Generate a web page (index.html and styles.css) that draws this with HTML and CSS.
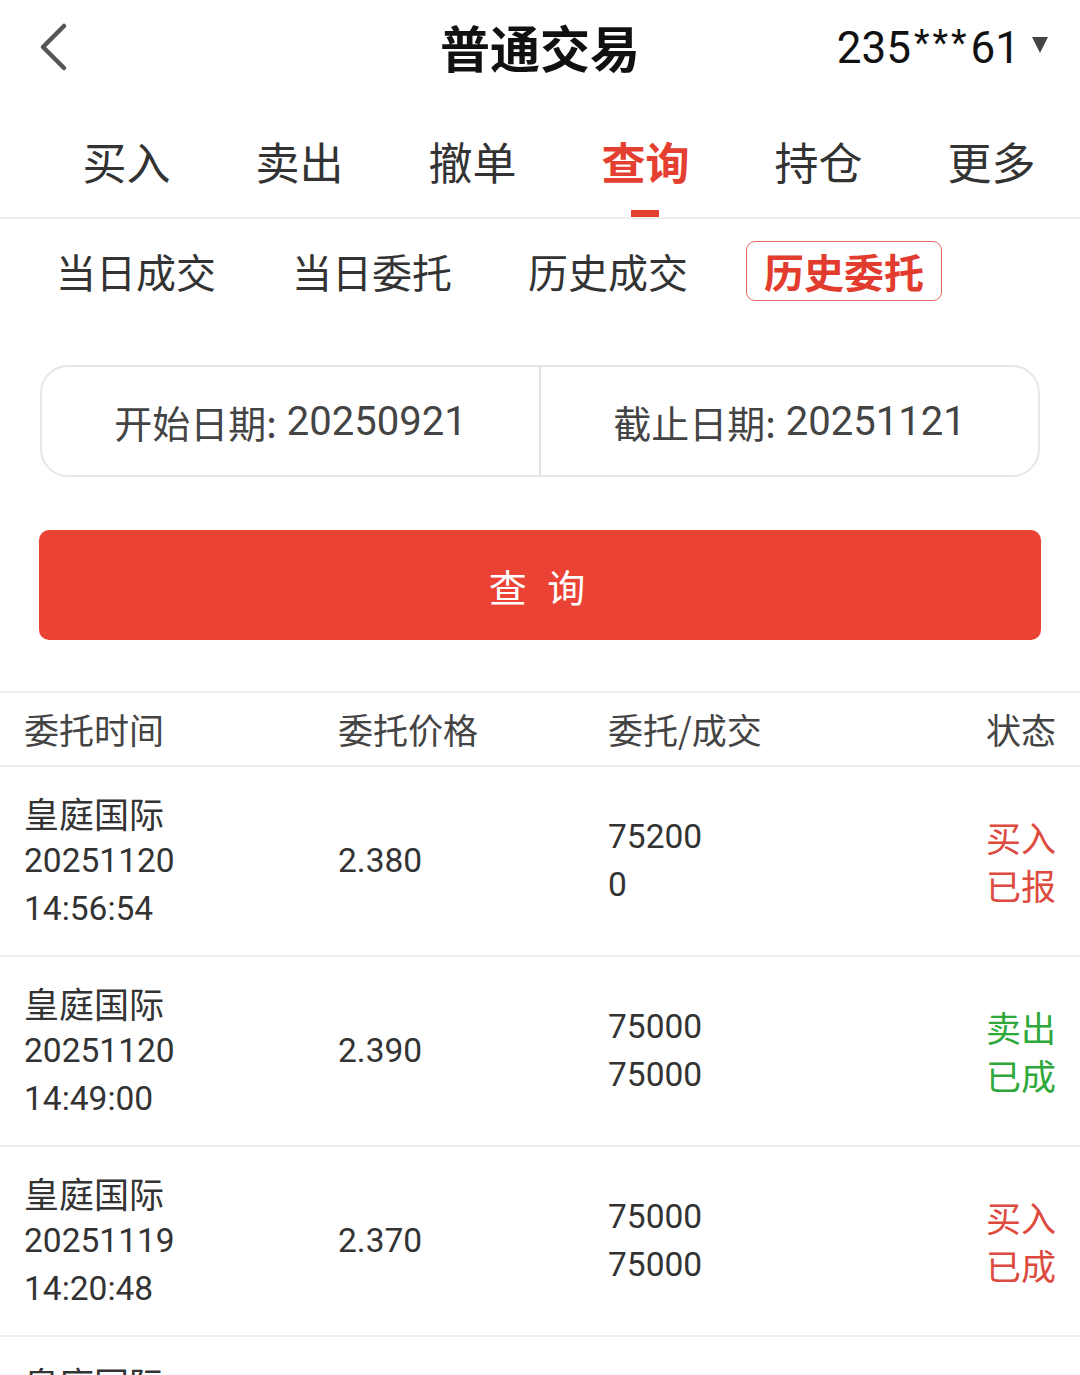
FILE: index.html
```html
<!DOCTYPE html>
<html lang="zh-CN">
<head>
    <meta charset="UTF-8">
    <meta name="viewport" content="width=device-width, initial-scale=1.0">
    <title>普通交易</title>
    <link rel="stylesheet" href="styles.css">
</head>
<body>
    <!-- Top bar -->
    <div class="topbar">
        <div class="back">
            <svg width="34" height="50" viewBox="0 0 34 50"><path d="M28 4 L7 25 L28 46" fill="none" stroke="#555" stroke-width="4.5" stroke-linecap="round" stroke-linejoin="round"/></svg>
        </div>
        <div class="title">普通交易</div>
        <div class="account">235<span class="stars">***</span>61<span class="caret"></span></div>
    </div>

    <!-- Main tabs -->
    <div class="tabs">
        <div class="tab">买入</div>
        <div class="tab">卖出</div>
        <div class="tab">撤单</div>
        <div class="tab active">查询</div>
        <div class="tab">持仓</div>
        <div class="tab">更多</div>
    </div>

    <!-- Sub tabs -->
    <div class="subtabs">
        <div class="subtab">当日成交</div>
        <div class="subtab">当日委托</div>
        <div class="subtab">历史成交</div>
        <div class="subtab active">历史委托</div>
    </div>

    <!-- Date range -->
    <div class="dates">
        <div class="date">开始日期: <span class="num">20250921</span></div>
        <div class="date">截止日期: <span class="num">20251121</span></div>
    </div>

    <div class="btn-wrap">
        <button class="btn">查 询</button>
    </div>

    <!-- Result table -->
    <div class="table">
        <div class="row head">
            <div>委托时间</div>
            <div>委托价格</div>
            <div>委托/成交</div>
            <div class="right">状态</div>
        </div>
        <div class="row">
            <div><div>皇庭国际</div><div class="num">20251120</div><div class="num">14:56:54</div></div>
            <div class="num">2.380</div>
            <div><div class="num">75200</div><div class="num">0</div></div>
            <div class="status red"><div>买入</div><div>已报</div></div>
        </div>
        <div class="row">
            <div><div>皇庭国际</div><div class="num">20251120</div><div class="num">14:49:00</div></div>
            <div class="num">2.390</div>
            <div><div class="num">75000</div><div class="num">75000</div></div>
            <div class="status green"><div>卖出</div><div>已成</div></div>
        </div>
        <div class="row">
            <div><div>皇庭国际</div><div class="num">20251119</div><div class="num">14:20:48</div></div>
            <div class="num">2.370</div>
            <div><div class="num">75000</div><div class="num">75000</div></div>
            <div class="status red"><div>买入</div><div>已成</div></div>
        </div>
        <div class="row">
            <div><div>皇庭国际</div><div class="num">20251119</div><div class="num">10:12:31</div></div>
            <div class="num">2.360</div>
            <div><div class="num">75000</div><div class="num">75000</div></div>
            <div class="status red"><div>买入</div><div>已成</div></div>
        </div>
    </div>
</body>
</html>
```

FILE: styles.css
```css
body {
    margin: 0;
    padding: 0;
    background: #fff;
    color: #333;
    font-family: "Noto Sans CJK SC", "Noto Sans", sans-serif;
    overflow: hidden;
}

.num {
    font-family: Roboto, "Noto Sans CJK SC", sans-serif;
}

/* Top bar */
.topbar {
    height: 96px;
    display: flex;
    align-items: center;
    justify-content: center;
    position: relative;
}
.back {
    position: absolute;
    left: 36px;
    top: 22px;
}
.title {
    font-size: 50px;
    font-weight: bold;
    color: #111;
    margin-top: -4px;
}
.account {
    position: absolute;
    right: 32px;
    top: 22px;
    font-family: Roboto, sans-serif;
    font-size: 44px;
    color: #111;
    display: flex;
    align-items: center;
}
.stars {
    font-size: 36px;
    letter-spacing: 3px;
    margin: -10px 1px 0 3px;
}
.caret {
    width: 0;
    height: 0;
    border-left: 8px solid transparent;
    border-right: 8px solid transparent;
    border-top: 16px solid #444;
    margin-left: 12px;
    margin-top: -6px;
}

/* Main tabs */
.tabs {
    display: flex;
    padding-left: 40px;
    height: 121px;
    border-bottom: 2px solid #eee;
}
.tab {
    width: 173px;
    text-align: center;
    font-size: 44px;
    color: #333;
    padding-top: 33px;
    position: relative;
}
.tab.active {
    color: #e53f31;
    font-weight: bold;
}
.tab.active::after {
    content: "";
    position: absolute;
    left: 72px;
    bottom: 0;
    width: 28px;
    height: 7px;
    background: #e53f31;
}

/* Sub tabs */
.subtabs {
    display: flex;
    align-items: center;
    gap: 40px;
    padding: 22px 0 0 38px;
    height: 60px;
}
.subtab {
    font-size: 40px;
    color: #333;
    padding: 0 17px;
    line-height: 58px;
    border: 1px solid transparent;
    border-radius: 9px;
}
.subtab.active {
    color: #e23c2e;
    font-weight: bold;
    border-color: #e06a5f;
}

/* Dates */
.dates {
    margin: 64px 40px 0 40px;
    height: 108px;
    border: 2px solid #e6e6e6;
    border-radius: 28px;
    display: flex;
}
.date {
    flex: 1;
    display: flex;
    align-items: center;
    justify-content: center;
    font-size: 38px;
    color: #444;
}
.date .num {
    margin-left: 10px;
    font-size: 40px;
}
.date + .date {
    border-left: 2px solid #e3e3e3;
}

/* Button */
.btn-wrap {
    padding: 53px 39px 0 39px;
}
.btn {
    width: 100%;
    height: 110px;
    border: none;
    border-radius: 10px;
    background: #ea4335;
    color: #fff;
    font-family: "Noto Sans CJK SC", sans-serif;
    font-size: 38px;
    letter-spacing: 6px;
}

/* Table */
.table {
    margin-top: 51px;
    border-top: 2px solid #eee;
}
.row {
    display: grid;
    grid-template-columns: 314px 270px 1fr auto;
    align-items: center;
    padding: 22px 24px;
    border-bottom: 2px solid #eee;
    font-size: 35px;
    line-height: 48px;
    height: 144px;
    color: #333;
}
.row .num {
    font-size: 33.5px;
}
.row.head {
    padding: 12px 24px;
    height: 48px;
    color: #444;
}
.right {
    text-align: right;
}
.red {
    color: #dd4a3e;
}
.green {
    color: #2ea83a;
}
```
